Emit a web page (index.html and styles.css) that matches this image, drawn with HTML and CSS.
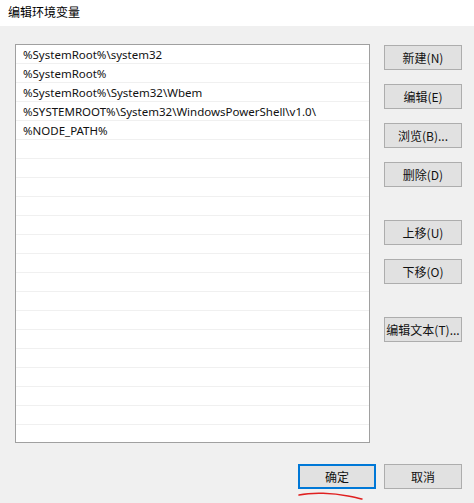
FILE: index.html
```html
<!DOCTYPE html>
<html>
<head>
<meta charset="utf-8">
<link rel="stylesheet" href="styles.css">
</head>
<body>
<div class="window">
  <div class="titlebar">编辑环境变量</div>
  <div class="body">
    <div class="main">
      <div class="list">
        <div class="row">%SystemRoot%\system32</div>
        <div class="row">%SystemRoot%</div>
        <div class="row">%SystemRoot%\System32\Wbem</div>
        <div class="row">%SYSTEMROOT%\System32\WindowsPowerShell\v1.0\</div>
        <div class="row">%NODE_PATH%</div>
        <div class="row"></div><div class="row"></div><div class="row"></div>
        <div class="row"></div><div class="row"></div><div class="row"></div>
        <div class="row"></div><div class="row"></div><div class="row"></div>
        <div class="row"></div><div class="row"></div><div class="row"></div>
        <div class="row"></div><div class="row"></div><div class="row"></div>
        <div class="row"></div>
      </div>
      <div class="side">
        <div class="group g1">
          <div class="btn">新建(N)</div>
          <div class="btn">编辑(E)</div>
          <div class="btn">浏览(B)...</div>
          <div class="btn">删除(D)</div>
        </div>
        <div class="group g2">
          <div class="btn">上移(U)</div>
          <div class="btn">下移(O)</div>
        </div>
        <div class="group g3">
          <div class="btn">编辑文本(T)...</div>
        </div>
      </div>
    </div>
    <div class="footer">
      <div class="okwrap">
        <div class="btn primary">确定</div>
        <svg class="scribble" width="70" height="10" viewBox="0 0 70 10"><path d="M1 4 C 15 1, 35 2, 50 5 S 62 8, 64 8" stroke="#e02020" stroke-width="1.5" fill="none" stroke-linecap="round"/></svg>
      </div>
      <div class="btn">取消</div>
    </div>
  </div>
</div>
</body>
</html>
```
FILE: styles.css
```css
html, body {
  margin: 0;
  padding: 0;
}
body {
  width: 474px;
  height: 503px;
  overflow: hidden;
  background: #f0f0f0;
  font-family: "Noto Sans CJK SC", "Noto Sans", sans-serif;
  font-size: 12px;
  color: #000;
}
.window {
  display: flex;
  flex-direction: column;
  height: 503px;
}
.titlebar {
  height: 26px;
  background: #fff;
  padding-left: 8px;
  line-height: 24px;
  font-size: 12px;
  color: #000;
}
.body {
  flex: 1;
  display: flex;
  flex-direction: column;
  padding: 18px 0 0 15px;
}
.main {
  display: flex;
}
.list {
  width: 353px;
  height: 397px;
  border: 1px solid #a0a0a0;
  background: #fff;
  overflow: hidden;
}
.row {
  height: 18px;
  border-bottom: 1px solid #f0f0f0;
  padding-left: 7px;
  line-height: 19px;
  font-family: "Noto Sans", "Open Sans", sans-serif;
  font-size: 11.5px;
  white-space: nowrap;
  color: #111;
}
.side {
  margin-left: 14px;
  padding-top: 1px;
  display: flex;
  flex-direction: column;
}
.group {
  display: flex;
  flex-direction: column;
  gap: 14px;
}
.g2 { margin-top: 33px; }
.g3 { margin-top: 33px; }
.btn {
  box-sizing: border-box;
  width: 78px;
  height: 25px;
  border: 1px solid #adadad;
  background: #e1e1e1;
  display: flex;
  align-items: center;
  justify-content: center;
  font-size: 12px;
  color: #111;
}
.btn.primary {
  border: 2px solid #0078d7;
}
.footer {
  display: flex;
  margin-top: 21px;
  padding-left: 283px;
  gap: 8px;
}
.okwrap {
  position: relative;
}
.scribble {
  position: absolute;
  left: 0;
  top: 27px;
}
```
